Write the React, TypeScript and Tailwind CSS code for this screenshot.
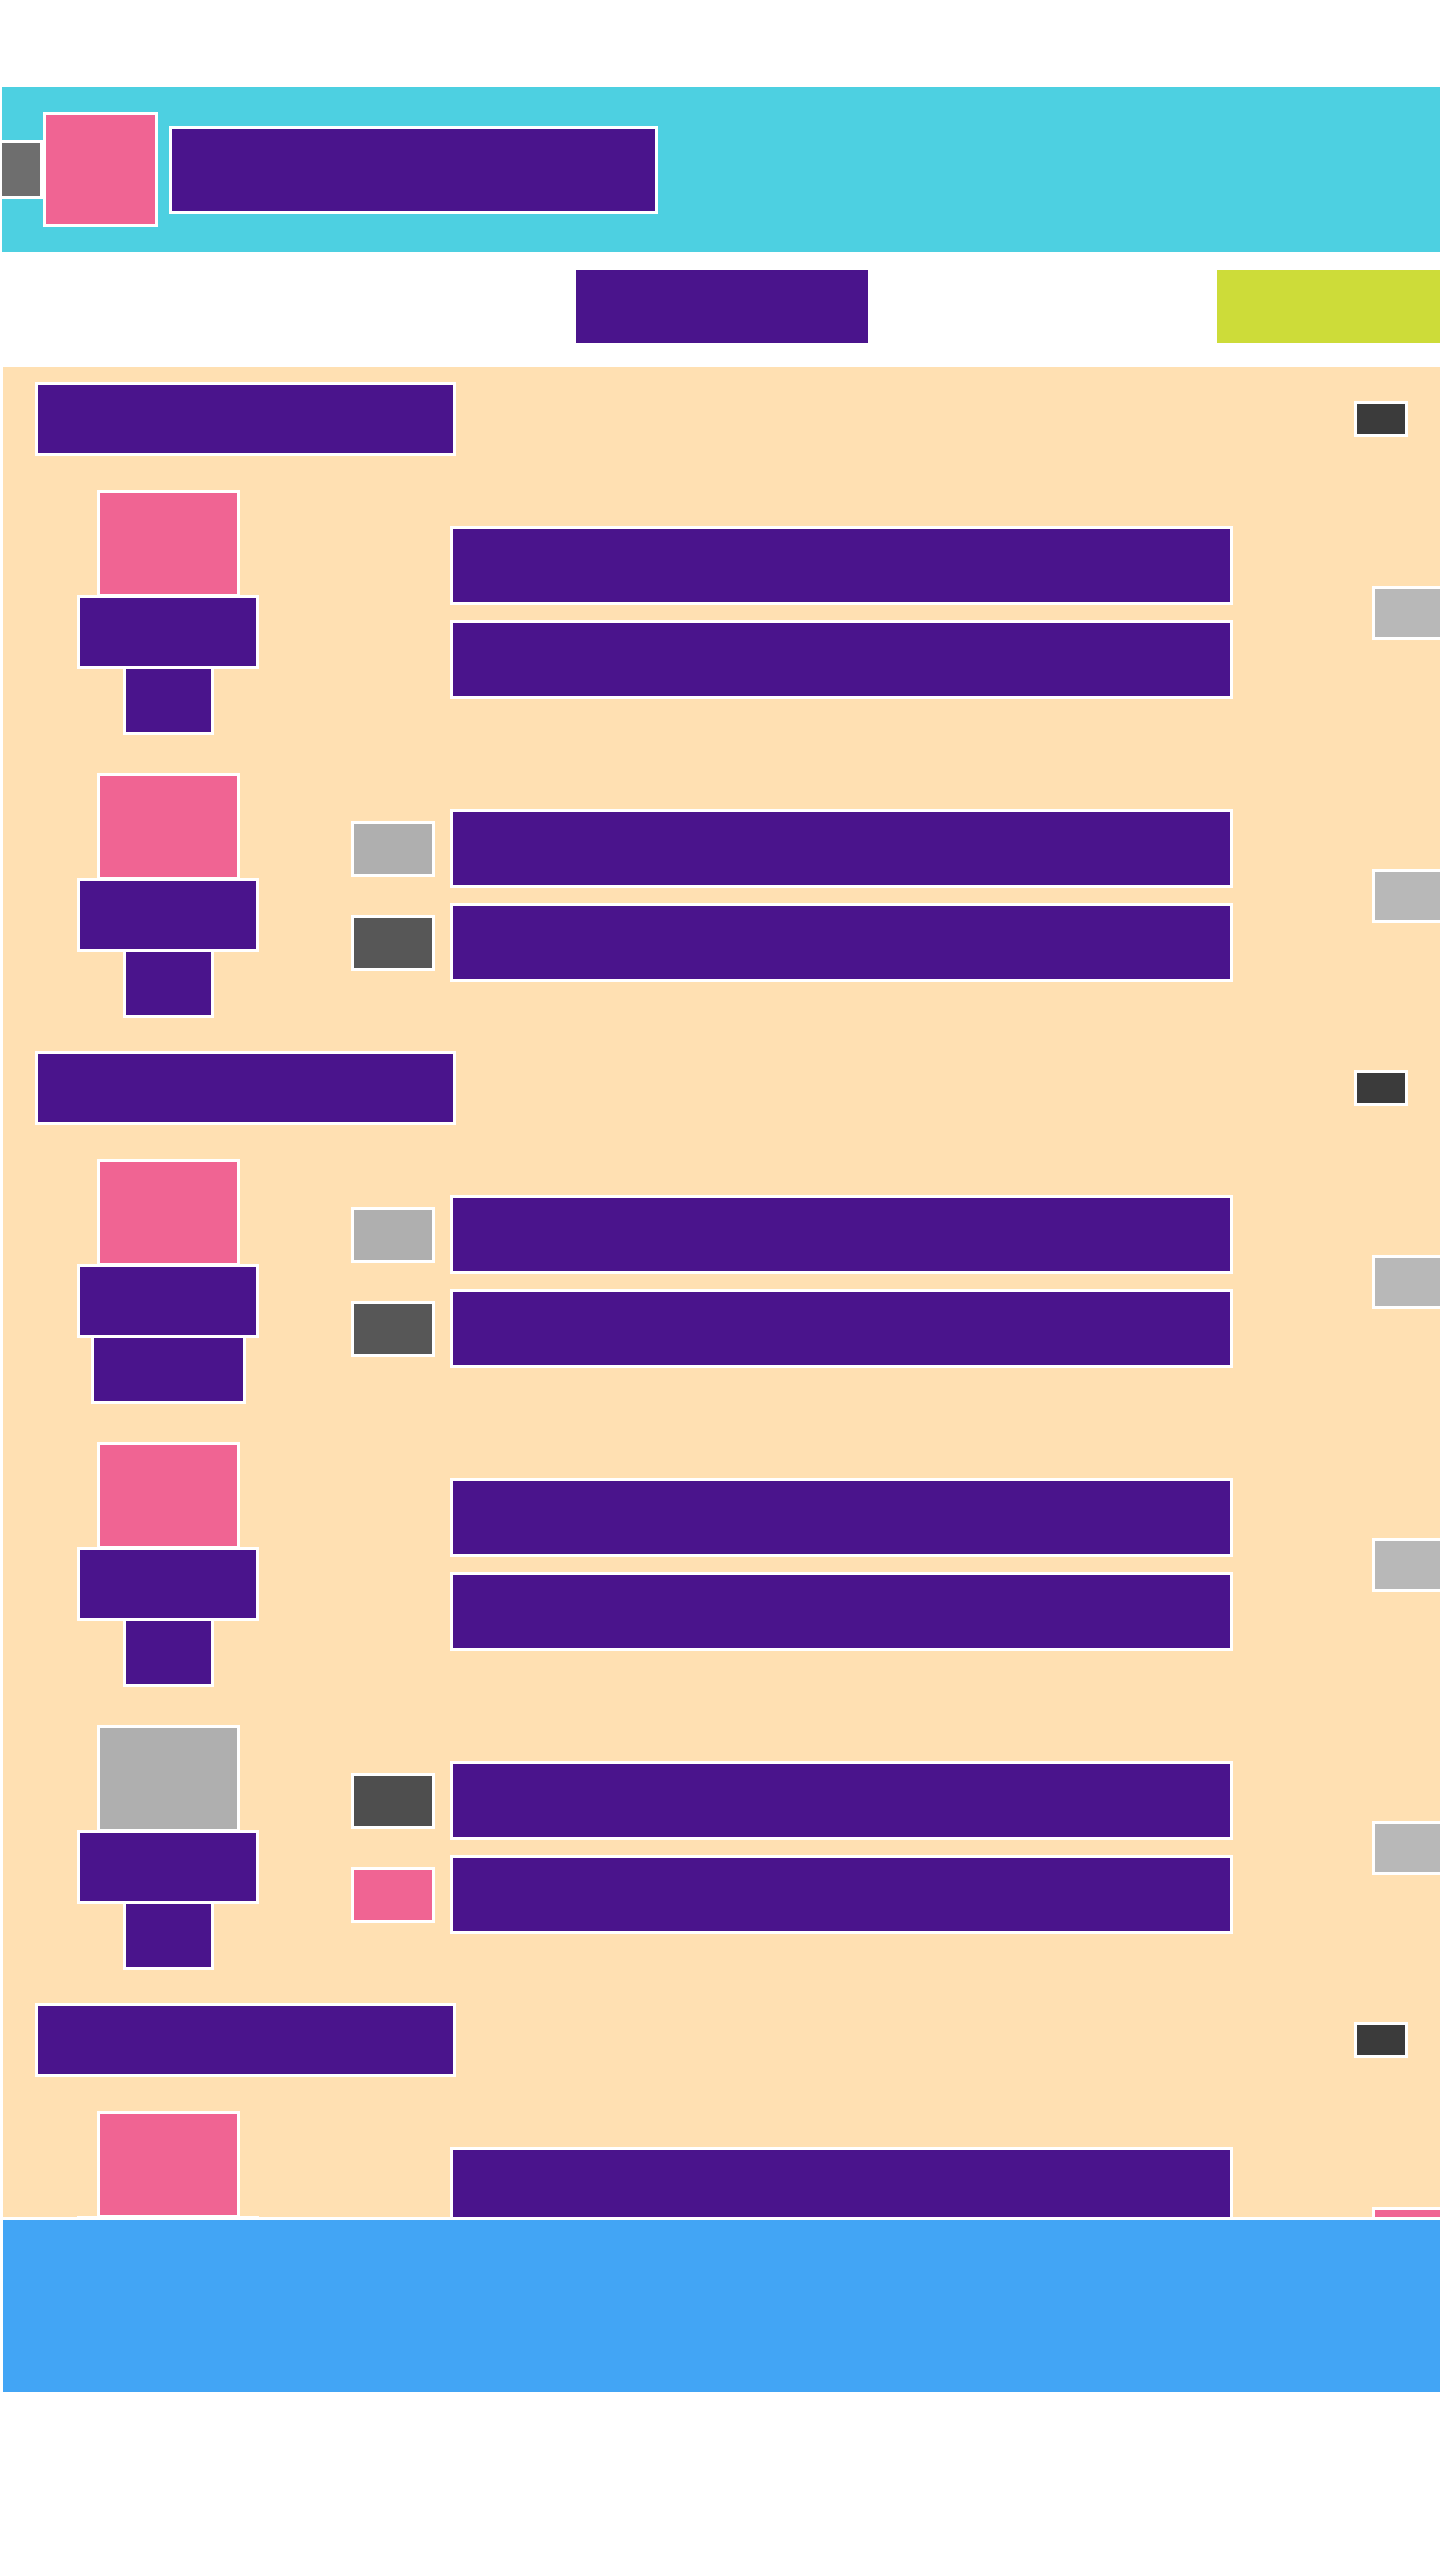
import React from "react";

type Fill = "pink" | "gray" | "light" | "dark" | "darker" | "side" | "sidePink";

const fills: Record<Fill, string> = {
  pink: "bg-[#f06493]",
  gray: "bg-[#afafaf]",
  light: "bg-[#afafaf]",
  dark: "bg-[#575757]",
  darker: "bg-[#4e4e4e]",
  side: "bg-[#b8b8b8]",
  sidePink: "bg-[#f06493]",
};

interface RowSpec {
  cover: Fill;
  wideTag?: boolean;
  icons?: [Fill, Fill];
  side: Fill;
}

const sections: RowSpec[][] = [
  [
    { cover: "pink", side: "side" },
    { cover: "pink", icons: ["light", "dark"], side: "side" },
  ],
  [
    { cover: "pink", wideTag: true, icons: ["light", "dark"], side: "side" },
    { cover: "pink", side: "side" },
    { cover: "gray", icons: ["darker", "pink"], side: "side" },
  ],
  [{ cover: "pink", side: "sidePink" }],
];

const Box: React.FC<{ className: string }> = ({ className }) => (
  <div className={`shrink-0 border-[3px] border-white ${className}`} />
);

const SectionHeader: React.FC = () => (
  <div className="flex items-center justify-between pl-[32px] pr-[32px] pt-[15px] pb-[14px]">
    <Box className="w-[421px] h-[74px] bg-[#4a148c]" />
    <Box className="w-[54px] h-[36px] bg-[#3b3b3b]" />
  </div>
);

const Row: React.FC<{ row: RowSpec }> = ({ row }) => (
  <div className="flex items-center pl-[32px] pt-[20px] pb-[18px]">
    <div className="w-[266px] shrink-0 flex flex-col items-center">
      <Box className={`w-[143px] h-[107px] ${fills[row.cover]}`} />
      <Box className="w-[182px] h-[74px] -mt-[2px] bg-[#4a148c]" />
      {row.wideTag ? (
        <Box className="w-[155px] h-[69px] -mt-[3px] bg-[#4a148c]" />
      ) : (
        <Box className="w-[91px] h-[69px] -mt-[3px] bg-[#4a148c]" />
      )}
    </div>
    <div className="ml-[50px] flex flex-col gap-[15px] shrink-0">
      {[0, 1].map((i) => (
        <div key={i} className="flex items-center gap-[15px]">
          <div className="w-[84px] shrink-0">
            {row.icons && <Box className={`w-[84px] h-[56px] ${fills[row.icons[i]]}`} />}
          </div>
          <Box className="w-[783px] h-[79px] bg-[#4a148c]" />
        </div>
      ))}
    </div>
    <Box className={`ml-[139px] w-[84px] h-[54px] ${fills[row.side]}`} />
  </div>
);

export default function App() {
  return (
    <div className="w-full min-h-[2560px] bg-white overflow-hidden pt-[87px]">
      <header className="ml-[2px] h-[165px] bg-[#4dd0e1] flex items-center overflow-hidden">
        <Box className="-ml-[3px] w-[44px] h-[59px] bg-[#6e6e6e]" />
        <Box className="w-[115px] h-[115px] bg-[#f06493]" />
        <Box className="ml-[11px] w-[489px] h-[88px] bg-[#4a148c]" />
      </header>

      <nav className="ml-[2px] mt-[18px] h-[73px] flex overflow-hidden">
        <div className="ml-[574px] w-[292px] h-full shrink-0 bg-[#4a148c]" />
        <div className="ml-[349px] w-[260px] h-full shrink-0 bg-[#cddc39]" />
      </nav>

      <main className="ml-[3px] mt-[24px] h-[1850px] overflow-hidden bg-[#ffe0b2]">
        {sections.map((rows, s) => (
          <section key={s}>
            <SectionHeader />
            {rows.map((row, r) => (
              <Row key={r} row={row} />
            ))}
          </section>
        ))}
      </main>

      <footer className="ml-[3px] mt-[3px] h-[172px] bg-[#42a5f5]" />
    </div>
  );
}
